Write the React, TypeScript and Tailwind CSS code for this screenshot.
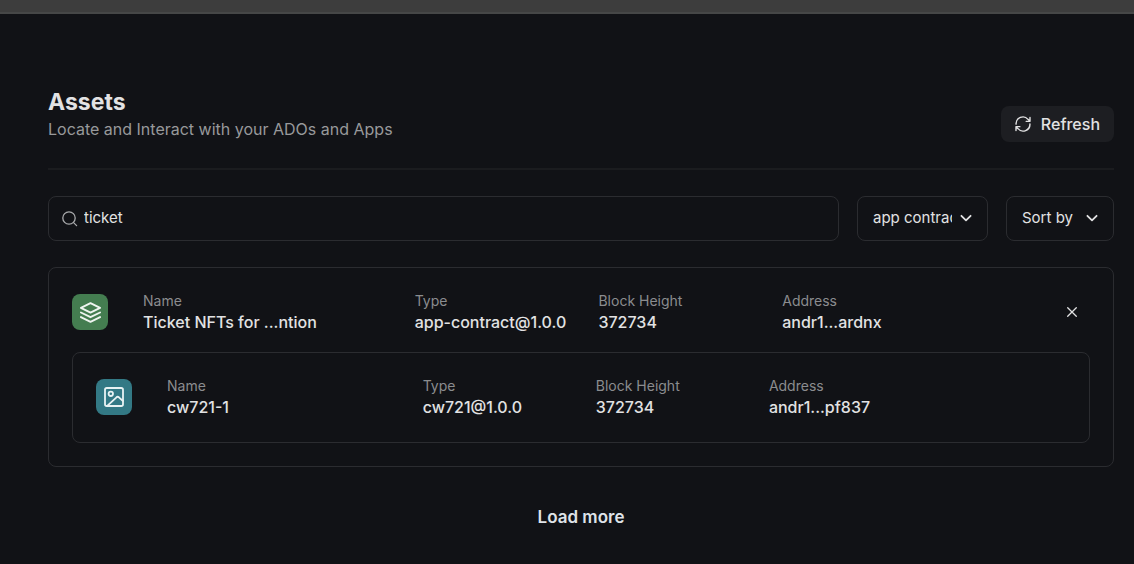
import { useState } from "react";
import type { ReactNode } from "react";

type Field = { label: string; value: string };

const appFields: Field[] = [
  { label: "Name", value: "Ticket NFTs for ...ntion" },
  { label: "Type", value: "app-contract@1.0.0" },
  { label: "Block Height", value: "372734" },
  { label: "Address", value: "andr1...ardnx" },
];

const childFields: Field[] = [
  { label: "Name", value: "cw721-1" },
  { label: "Type", value: "cw721@1.0.0" },
  { label: "Block Height", value: "372734" },
  { label: "Address", value: "andr1...pf837" },
];

const stroke = {
  fill: "none",
  stroke: "currentColor",
  strokeLinecap: "round" as const,
  strokeLinejoin: "round" as const,
  "aria-hidden": true,
};

function ChevronDown() {
  return (
    <svg viewBox="0 0 12 12" className="pointer-events-none absolute right-4 top-4 size-3" {...stroke} strokeWidth="1.8">
      <path d="M1.4 3.8 6 8.4l4.6-4.6" />
    </svg>
  );
}

function RefreshIcon() {
  return (
    <svg viewBox="0 0 24 24" className="size-4" {...stroke} strokeWidth="2.1">
      <path d="M1.6 12.2A10.2 10.2 0 0 1 19.5 5l3 3M22.500 2.200V8h-5.800" />
      <path d="M22.4 11.8A10.2 10.2 0 0 1 4.5 19l-3-3M1.500 21.800V16h5.800" />
    </svg>
  );
}

function SearchIcon() {
  return (
    <svg viewBox="0 0 16 16" className="size-4 text-[#a9aaac]" {...stroke} strokeWidth="1.3">
      <circle cx="7" cy="7" r="6.2" />
      <path d="m11.6 11.6 3 3" />
    </svg>
  );
}

function LayersIcon() {
  return (
    <svg viewBox="0 0 24 24" className="size-[23px]" {...stroke} strokeWidth="2">
      <path d="m12 2.3 10 4.900-10 4.900L2 7.200z" />
      <path d="m2 12 10 4.900L22 12" />
      <path d="m2 16.8 10 4.900 10-4.900" />
    </svg>
  );
}

function ImageIcon() {
  return (
    <svg viewBox="0 0 24 24" className="size-6" {...stroke} strokeWidth="1.8">
      <rect x="3" y="3" width="18" height="18" rx="1.8" />
      <circle cx="8.8" cy="8.8" r="2.2" />
      <path d="M5.5 20.7 14.500 12.300q1.200-1 2.400 0l4.100 3.700" />
    </svg>
  );
}

function AssetRow({ icon, fields, action }: { icon: ReactNode; fields: Field[]; action?: ReactNode }) {
  return (
    <div className="flex items-center">
      {icon}
      <dl className="ml-[35px] grid flex-1 grid-cols-[1.5fr_1fr_1fr_1fr] gap-2 whitespace-nowrap">
        {fields.map((f) => (
          <div key={f.label} className="min-w-0">
            <dt className="text-sm leading-5 text-[#8b8c8f]">{f.label}</dt>
            <dd className="text-base leading-[22px] font-medium text-[#e2e2e3]">{f.value}</dd>
          </div>
        ))}
      </dl>
      <div className="flex w-[132px] justify-end pr-3">{action}</div>
    </div>
  );
}

export default function App() {
  const [query, setQuery] = useState("ticket");
  const [open, setOpen] = useState(true);

  return (
    <div className="flex min-h-screen flex-col bg-[#111216] font-['Inter',sans-serif] text-[#e2e2e3]">
      <div className="h-3.5 border-b-2 border-[#464747] bg-[#3d3d3d]" />
      <main className="flex-1 pt-[74px] pr-5 pl-12">
        <header className="flex items-end justify-between border-b-2 border-[#1b1c1f] pb-[26px]">
          <div>
            <h1 className="text-[23px] leading-7 font-bold">Assets</h1>
            <p className="text-base leading-[26px] text-[#98999b]">Locate and Interact with your ADOs and Apps</p>
          </div>
          <button type="button" className="flex h-9 items-center gap-2.5 rounded-lg bg-[#1d1e22] px-3.5 text-base font-medium">
            <RefreshIcon />
            Refresh
          </button>
        </header>

        <div className="mt-[26px] flex gap-[18px]">
          <label className="flex h-[45px] flex-1 items-center gap-1.5 rounded-lg border border-[#2b2c30] px-[13px]">
            <SearchIcon />
            <input
              type="text"
              aria-label="Search assets"
              value={query}
              onChange={(e) => setQuery(e.target.value)}
              className="min-w-0 flex-1 bg-transparent text-[15px] outline-none"
            />
          </label>
          <div className="relative w-[131px]">
            <select aria-label="Asset type" className="h-[45px] w-full appearance-none rounded-lg border border-[#2b2c30] bg-[#111216] pr-[35px] pl-[15px] text-[15px]">
              <option>app contract</option>
            </select>
            <ChevronDown />
          </div>
          <div className="relative w-[108px]">
            <select aria-label="Sort by" className="h-[45px] w-full appearance-none rounded-lg border border-[#2b2c30] bg-[#111216] pr-[35px] pl-[15px] text-[15px]">
              <option>Sort by</option>
            </select>
            <ChevronDown />
          </div>
        </div>

        <section className="mt-[26px] rounded-lg border border-[#2b2c30] px-[23px] py-[23px]">
          <AssetRow
            icon={
              <div className="flex size-9 items-center justify-center rounded-lg bg-[#447d50] text-[#eef4ef]">
                <LayersIcon />
              </div>
            }
            fields={appFields}
            action={
              <button type="button" aria-label="Toggle components" onClick={() => setOpen(!open)}>
                <svg viewBox="0 0 12 12" className="size-3" {...stroke} strokeWidth="1.3">
                  <path d="m1.7 1.7 8.600 8.600M10.300 1.700l-8.600 8.600" />
                </svg>
              </button>
            }
          />
          {open && (
            <div className="mt-[19px] rounded-lg border border-[#2b2c30] px-[23px] pt-[23px] pb-6">
              <AssetRow
                icon={
                  <div className="flex size-9 items-center justify-center rounded-lg bg-[#337985] text-[#e8f2f3]">
                    <ImageIcon />
                  </div>
                }
                fields={childFields}
              />
            </div>
          )}
        </section>

        <div className="flex justify-center pt-9 pb-7">
          <button type="button" className="text-[17px] leading-7 font-semibold text-[#dfe3e8]">Load more</button>
        </div>
      </main>
    </div>
  );
}
